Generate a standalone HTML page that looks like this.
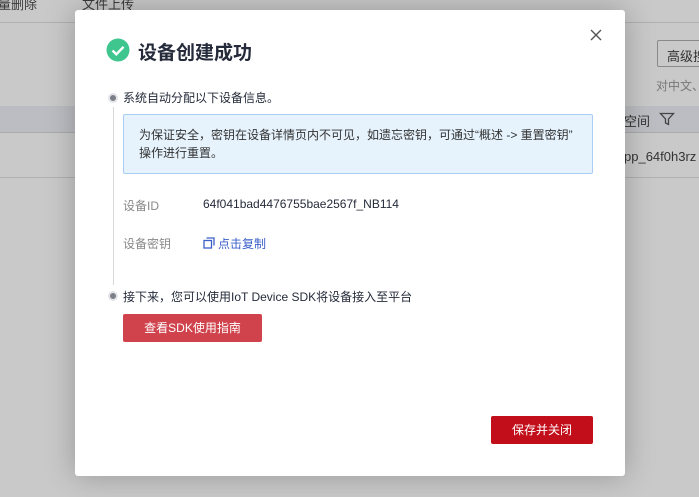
<!DOCTYPE html>
<html><head><meta charset="utf-8"><style>
*{margin:0;padding:0;box-sizing:border-box}
body{width:699px;height:497px;overflow:hidden;background:#c9c9c9;font-family:"Liberation Sans","Noto Sans CJK SC",sans-serif;position:relative}
.abs{position:absolute;white-space:nowrap}
.bgt{color:#3a3a3a;font-size:13px}
.modal{position:absolute;left:75px;top:10px;width:550px;height:466px;background:#fff;border-radius:3px;box-shadow:0 0 30px rgba(0,0,0,.25)}
.t{position:absolute;white-space:nowrap}
</style></head><body>
<div class="abs bgt" style="left:-2px;top:-6px">量删除</div>
<div class="abs bgt" style="left:82px;top:-6px">文件上传</div>
<div class="abs" style="left:0;top:22px;width:699px;height:1px;background:#b0b0b0"></div>
<div class="abs" style="left:0;top:106px;width:699px;height:27px;background:#bcbdc2;border-bottom:1px solid #aaa"></div>
<div class="abs" style="left:0;top:177px;width:699px;height:1px;background:#b0b0b0"></div>
<div class="abs" style="left:657px;top:40px;width:60px;height:27px;border:1px solid #8a8a8a;border-radius:2px;font-size:13px;color:#333;padding:5px 0 0 9px">高级搜</div>
<div class="abs" style="left:656px;top:77px;font-size:12px;color:#777">对中文、</div>
<div class="abs" style="left:624px;top:111px;font-size:13px;color:#333">空间</div>
<svg class="abs" style="left:659px;top:112px" width="16" height="14" viewBox="0 0 16 14"><path d="M1.5 1.5h13L9.5 7v5.5l-3-1.5V7z" fill="none" stroke="#444" stroke-width="1.3"/></svg>
<div class="abs" style="left:624px;top:149px;font-size:13px;color:#333">pp_64f0h3rz</div>

<div class="modal">
<svg class="abs" style="left:515px;top:19px" width="12" height="12" viewBox="0 0 12 12"><path d="M1 1l10 10M11 1L1 11" stroke="#555" stroke-width="1.4"/></svg>
<svg class="abs" style="left:31px;top:28px" width="24" height="24" viewBox="0 0 24 24"><circle cx="12" cy="12" r="11.5" fill="#3fc68e"/><path d="M6.5 12.5l3.8 3.8 7.3-7.5" fill="none" stroke="#fff" stroke-width="2.4"/></svg>
<div class="t" style="left:63px;top:28px;font-size:19px;font-weight:bold;color:#252b3a">设备创建成功</div>

<div class="abs" style="left:33px;top:83px;width:10px;height:10px;border-radius:50%;background:#7c7f88;border:2px solid #e4e5ea"></div>
<div class="abs" style="left:37.5px;top:97px;width:1px;height:178px;background:#d8d8d8"></div>
<div class="t" style="left:48px;top:79px;font-size:12px;color:#252b3a">系统自动分配以下设备信息。</div>
<div class="abs" style="left:48px;top:104px;width:470px;height:60px;background:#e6f3fd;border:1px solid #a9cdf5;border-radius:2px"></div>
<div class="t" style="left:64px;top:116px;font-size:12px;color:#333;line-height:18px">为保证安全，密钥在设备详情页内不可见，如遗忘密钥，可通过“概述 -&gt; 重置密钥”<br>操作进行重置。</div>
<div class="t" style="left:48px;top:187px;font-size:12px;color:#888">设备ID</div>
<div class="t" style="left:128px;top:187px;font-size:12px;color:#252b3a">64f041bad4476755bae2567f_NB114</div>
<div class="t" style="left:48px;top:225px;font-size:12px;color:#888">设备密钥</div>
<svg class="abs" style="left:128px;top:227px" width="12" height="12" viewBox="0 0 12 12"><rect x="1" y="3.5" width="7.5" height="7.5" fill="none" stroke="#3b5fc9" stroke-width="1.3"/><path d="M3.5 1h7.5v7.5" fill="none" stroke="#3b5fc9" stroke-width="1.3"/></svg>
<div class="t" style="left:143px;top:225px;font-size:12px;color:#3b5fc9">点击复制</div>

<div class="abs" style="left:33px;top:281px;width:10px;height:10px;border-radius:50%;background:#7c7f88;border:2px solid #e4e5ea"></div>
<div class="t" style="left:48px;top:278px;font-size:12px;color:#252b3a">接下来，您可以使用IoT Device SDK将设备接入至平台</div>
<div class="abs" style="left:48px;top:304px;width:139px;height:28px;background:#d0424c;border-radius:2px;color:#fff;font-size:12px;text-align:center;line-height:28px">查看SDK使用指南</div>
<div class="abs" style="left:416px;top:406px;width:102px;height:28px;background:#c20e1a;border-radius:2px;color:#fff;font-size:12px;text-align:center;line-height:28px">保存并关闭</div>
</div>
</body></html>
